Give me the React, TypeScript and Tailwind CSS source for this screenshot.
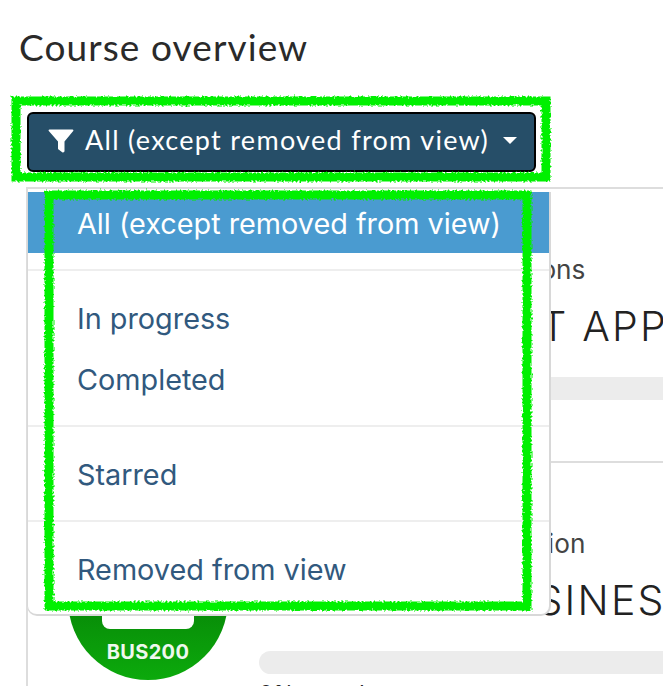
const menuItem = "flex h-[61px] items-center whitespace-nowrap pl-[49px] pt-[2px] text-[28.8px] text-[#31597e]";

function CourseBadge() {
  return (
    <svg width="160" height="160" viewBox="0 0 160 160" className="shrink-0">
      <defs>
        <linearGradient id="badge" x1="0" y1="0" x2="0" y2="1">
          <stop offset="0.6" stopColor="#088f08" />
          <stop offset="1" stopColor="#0caa0c" />
        </linearGradient>
      </defs>
      <circle cx="80" cy="80" r="80" fill="url(#badge)" />
      <path d="M34 60h92v41a8 8 0 0 1-8 8H42a8 8 0 0 1-8-8z" fill="#fff" />
      <text x="80" y="139" textAnchor="middle" fontSize="20" fontWeight="700" fill="#eef8ee" fontFamily="Inter, sans-serif" letterSpacing="0.3">
        BUS200
      </text>
    </svg>
  );
}

function CourseRow({ category, name, last }: { category: string; name: string; last?: boolean }) {
  return (
    <div className={last ? "flex gap-[31px] pl-[40px] pt-[57px]" : "flex h-[274px] gap-[31px] border-b-2 border-[#dddddd] pl-[40px] pt-[57px]"}>
      <CourseBadge />
      <div className="min-w-0 flex-1 font-['Inter',sans-serif]">
        <p className="mt-[6px] whitespace-nowrap text-[26.2px] leading-[36px] text-[#444444]">{category}</p>
        <p className="mt-[13px] whitespace-nowrap text-[41px] font-light leading-[50px] tracking-[2.2px] text-[#222222]">{name}</p>
        <div className="mt-[26px] h-[23px] w-[500px] rounded-l-[12px] bg-[#ececec]" />
        {last ? <p className="mt-[3px] text-[22px] text-[#222222]">0% complete</p> : null}
      </div>
    </div>
  );
}

export default function App() {
  return (
    <div className="relative h-[686px] w-[663px] overflow-hidden bg-white font-['Lato',sans-serif]">
      <h1 className="pl-[19px] pt-[25px] text-[37px] font-normal leading-[44px] tracking-[1.1px] text-[#2a2a2a]">Course overview</h1>

      <div className="ml-[27px] mt-[43px] flex h-[60px] w-[509px] items-center rounded-[6px] border-2 border-black bg-[#264e68] pl-[19px] text-[27px] tracking-[1.3px] text-white">
        <svg width="26" height="26" viewBox="0 0 26 26" className="mb-[2px] shrink-0">
          <path d="M1.5 1.5h23c.8 0 1.2.9.7 1.5L16.5 13.4V23c0 1.2-1.3 1.9-2.3 1.2l-3.6-2.7a1.4 1.4 0 0 1-.6-1.1v-7L.8 3c-.5-.6-.1-1.5.7-1.5z" fill="#fff" />
        </svg>
        <span className="mb-[3px] ml-[11px] whitespace-nowrap">All (except removed from view)</span>
        <span className="mb-[4px] ml-[14px] h-0 w-0 border-x-[7px] border-t-[7px] border-x-transparent border-t-white" />
      </div>

      <div className="ml-[26px] mt-[15px] border-l-2 border-t-2 border-[#dddddd]">
        <CourseRow category="Business Communications" name="LEAN MARKET APPROACH" />
        <CourseRow category="Corporate Communication" name="GENERAL BUSINESS" last />
      </div>

      <div className="absolute left-[27px] top-[192px] h-[424px] w-[524px] rounded-b-[10px] border-b-2 border-l border-r-2 border-[#d8d8d8] bg-white font-['Inter',sans-serif]">
        <div className={`${menuItem} bg-[#4a9bd0] !text-white`}>All (except removed from view)</div>
        <div className="my-[16px] h-[2px] bg-[#eeeeee]" />
        <div className={menuItem}>In progress</div>
        <div className={menuItem}>Completed</div>
        <div className="my-[16px] h-[2px] bg-[#eeeeee]" />
        <div className={menuItem}>Starred</div>
        <div className="my-[16px] h-[2px] bg-[#eeeeee]" />
        <div className={menuItem}>Removed from view</div>
      </div>

      <svg className="pointer-events-none absolute inset-0" width="663" height="686" viewBox="0 0 663 686">
        <defs>
          <filter id="rough" x="-5%" y="-5%" width="110%" height="110%">
            <feTurbulence type="fractalNoise" baseFrequency="0.5" numOctaves="2" seed="4" />
            <feDisplacementMap in="SourceGraphic" scale="5" />
          </filter>
        </defs>
        <g fill="none" stroke="#00f000" strokeWidth="9" filter="url(#rough)">
          <rect x="16" y="101" width="530" height="76" />
          <rect x="49" y="195" width="478" height="411" />
        </g>
      </svg>
    </div>
  );
}
